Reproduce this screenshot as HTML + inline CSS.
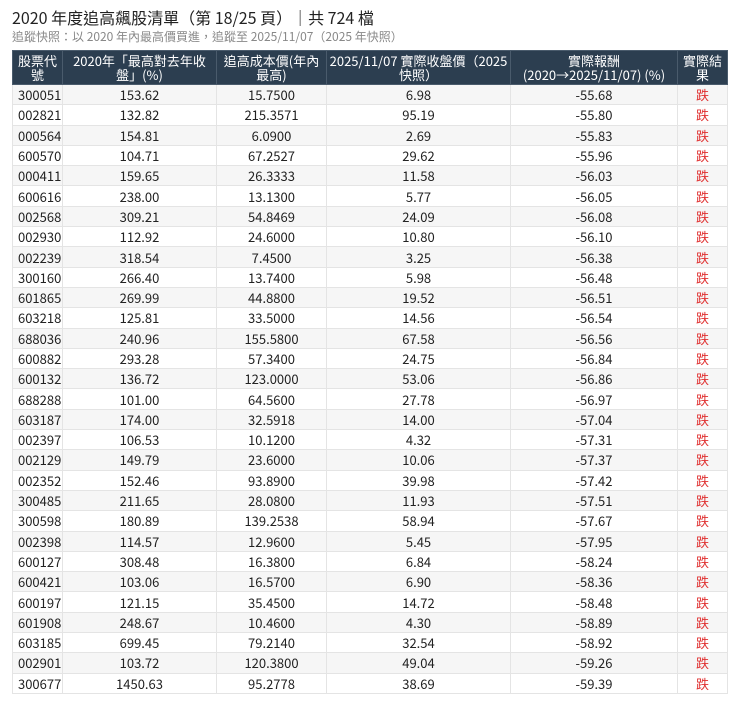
<!DOCTYPE html>
<html><head><meta charset="utf-8"><style>
body{margin:0;background:#fff;font-family:"Noto Sans CJK TC",sans-serif;color:#222;}
.t{position:absolute;left:12px;top:6px;font-size:16px;line-height:22px;color:#222;white-space:nowrap;}
.s{position:absolute;left:12px;top:29px;font-size:12px;line-height:16px;color:#888;white-space:nowrap;}
table{position:absolute;left:12px;top:50px;border-collapse:collapse;width:715px;table-layout:fixed;font-size:13px;}
th{background:#2c3e50;color:#fff;font-weight:normal;height:33px;line-height:14px;font-size:13px;border:1px solid #4a5b6c;padding:0 2px;}
td{height:19.3px;border:1px solid #e4e4e4;text-align:center;padding:0;line-height:19px;}
td:first-child{text-align:left;padding-left:5px;}
tr:nth-child(even) td{background:#f6f6f6;}
.r{color:#e03030;}
</style></head><body>
<div class="t">2020 年度追高飆股清單（第 18/25 頁）｜共 724 檔</div>
<div class="s">追蹤快照：以 2020 年內最高價買進，追蹤至 2025/11/07（2025 年快照）</div>
<table>
<colgroup><col style="width:50px"><col style="width:154px"><col style="width:110px"><col style="width:184px"><col style="width:167px"><col style="width:50px"></colgroup>
<tr><th>股票代號</th><th>2020年「最高對去年收盤」(%)</th><th>追高成本價(年內最高)</th><th>2025/11/07 實際收盤價（2025快照）</th><th>實際報酬<br>(2020→2025/11/07) (%)</th><th>實際結果</th></tr>
<tr><td>300051</td><td>153.62</td><td>15.7500</td><td>6.98</td><td>-55.68</td><td class="r">跌</td></tr>
<tr><td>002821</td><td>132.82</td><td>215.3571</td><td>95.19</td><td>-55.80</td><td class="r">跌</td></tr>
<tr><td>000564</td><td>154.81</td><td>6.0900</td><td>2.69</td><td>-55.83</td><td class="r">跌</td></tr>
<tr><td>600570</td><td>104.71</td><td>67.2527</td><td>29.62</td><td>-55.96</td><td class="r">跌</td></tr>
<tr><td>000411</td><td>159.65</td><td>26.3333</td><td>11.58</td><td>-56.03</td><td class="r">跌</td></tr>
<tr><td>600616</td><td>238.00</td><td>13.1300</td><td>5.77</td><td>-56.05</td><td class="r">跌</td></tr>
<tr><td>002568</td><td>309.21</td><td>54.8469</td><td>24.09</td><td>-56.08</td><td class="r">跌</td></tr>
<tr><td>002930</td><td>112.92</td><td>24.6000</td><td>10.80</td><td>-56.10</td><td class="r">跌</td></tr>
<tr><td>002239</td><td>318.54</td><td>7.4500</td><td>3.25</td><td>-56.38</td><td class="r">跌</td></tr>
<tr><td>300160</td><td>266.40</td><td>13.7400</td><td>5.98</td><td>-56.48</td><td class="r">跌</td></tr>
<tr><td>601865</td><td>269.99</td><td>44.8800</td><td>19.52</td><td>-56.51</td><td class="r">跌</td></tr>
<tr><td>603218</td><td>125.81</td><td>33.5000</td><td>14.56</td><td>-56.54</td><td class="r">跌</td></tr>
<tr><td>688036</td><td>240.96</td><td>155.5800</td><td>67.58</td><td>-56.56</td><td class="r">跌</td></tr>
<tr><td>600882</td><td>293.28</td><td>57.3400</td><td>24.75</td><td>-56.84</td><td class="r">跌</td></tr>
<tr><td>600132</td><td>136.72</td><td>123.0000</td><td>53.06</td><td>-56.86</td><td class="r">跌</td></tr>
<tr><td>688288</td><td>101.00</td><td>64.5600</td><td>27.78</td><td>-56.97</td><td class="r">跌</td></tr>
<tr><td>603187</td><td>174.00</td><td>32.5918</td><td>14.00</td><td>-57.04</td><td class="r">跌</td></tr>
<tr><td>002397</td><td>106.53</td><td>10.1200</td><td>4.32</td><td>-57.31</td><td class="r">跌</td></tr>
<tr><td>002129</td><td>149.79</td><td>23.6000</td><td>10.06</td><td>-57.37</td><td class="r">跌</td></tr>
<tr><td>002352</td><td>152.46</td><td>93.8900</td><td>39.98</td><td>-57.42</td><td class="r">跌</td></tr>
<tr><td>300485</td><td>211.65</td><td>28.0800</td><td>11.93</td><td>-57.51</td><td class="r">跌</td></tr>
<tr><td>300598</td><td>180.89</td><td>139.2538</td><td>58.94</td><td>-57.67</td><td class="r">跌</td></tr>
<tr><td>002398</td><td>114.57</td><td>12.9600</td><td>5.45</td><td>-57.95</td><td class="r">跌</td></tr>
<tr><td>600127</td><td>308.48</td><td>16.3800</td><td>6.84</td><td>-58.24</td><td class="r">跌</td></tr>
<tr><td>600421</td><td>103.06</td><td>16.5700</td><td>6.90</td><td>-58.36</td><td class="r">跌</td></tr>
<tr><td>600197</td><td>121.15</td><td>35.4500</td><td>14.72</td><td>-58.48</td><td class="r">跌</td></tr>
<tr><td>601908</td><td>248.67</td><td>10.4600</td><td>4.30</td><td>-58.89</td><td class="r">跌</td></tr>
<tr><td>603185</td><td>699.45</td><td>79.2140</td><td>32.54</td><td>-58.92</td><td class="r">跌</td></tr>
<tr><td>002901</td><td>103.72</td><td>120.3800</td><td>49.04</td><td>-59.26</td><td class="r">跌</td></tr>
<tr><td>300677</td><td>1450.63</td><td>95.2778</td><td>38.69</td><td>-59.39</td><td class="r">跌</td></tr>
</table>
</body></html>
